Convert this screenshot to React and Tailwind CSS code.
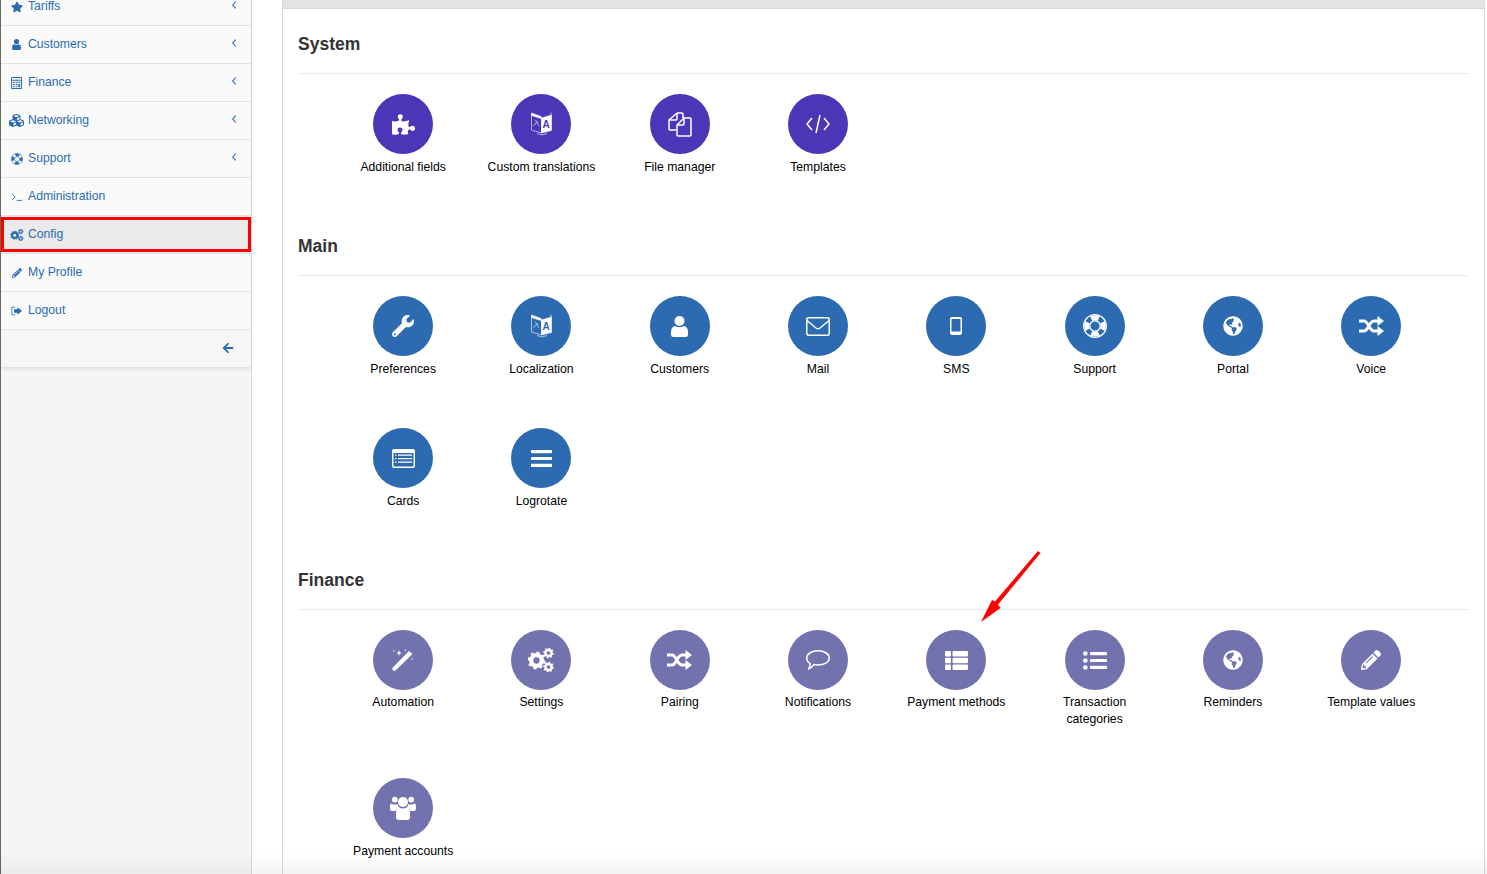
import React from 'react';
import { FaStar, FaCubes, FaArrowLeft, FaPuzzlePiece, FaWrench, FaGlobeAmericas, FaPencilAlt } from 'react-icons/fa';

// Old style (thin) icons that the icon packages only have in a heavier cut
function TerminalIcon({ className }) {
  return (
    <svg viewBox="0 0 14 12" className={className} fill="none" stroke="currentColor" strokeWidth="1">
      <path d="M1 2.5 L5 6 L1 9.5" />
      <path d="M6.5 10 H13" />
    </svg>
  );
}

function LogoutIcon({ className }) {
  return (
    <svg viewBox="0 0 14 12" className={className} fill="currentColor">
      <path d="M5 1 H2 Q0.5 1 0.5 2.5 V9.5 Q0.5 11 2 11 H5 V10 H2.2 Q1.5 10 1.5 9.3 V2.7 Q1.5 2 2.2 2 H5 Z" />
      <path d="M7.5 1.5 L13 6 L7.5 10.5 V8 H3.5 V4 H7.5 Z" />
    </svg>
  );
}

function CalculatorIcon({ className }) {
  return (
    <svg viewBox="0 0 12 13" className={className} fill="currentColor">
      <path fillRule="evenodd" d="M1 0 H11 Q12 0 12 1 V12 Q12 13 11 13 H1 Q0 13 0 12 V1 Q0 0 1 0 Z M1 1 V3 H11 V1 Z M1 4 V12 H11 V4 Z" />
      <path d="M2 5 H4 V6.5 H2 Z M5 5 H7 V6.5 H5 Z M8 5 H10 V6.5 H8 Z M2 7.5 H4 V9 H2 Z M5 7.5 H7 V9 H5 Z M8 7.5 H10 V11 H8 Z M2 10 H4 V11 H2 Z M5 10 H7 V11 H5 Z" />
    </svg>
  );
}

function UserIcon({ className }) {
  return (
    <svg viewBox="0 0 17 21" className={className} fill="currentColor">
      <circle cx="8.5" cy="5" r="5" />
      <path d="M4 10 Q8.5 12.5 13 10 Q17 11 17 16 V18.5 Q17 21 14.5 21 H2.5 Q0 21 0 18.5 V16 Q0 11 4 10 Z" />
    </svg>
  );
}

function RingIcon({ className }) {
  return (
    <svg viewBox="0 0 24 24" className={className} fill="none" stroke="currentColor">
      <circle cx="12" cy="12" r="11.3" strokeWidth="1.3" />
      <circle cx="12" cy="12" r="5.2" strokeWidth="1.3" />
      <circle cx="12" cy="12" r="8.2" strokeWidth="5" pathLength="100" strokeDasharray="15 10" strokeDashoffset="7.5" />
    </svg>
  );
}

function Cog({ x, y, r }) {
  return (
    <g transform={`translate(${x} ${y})`} fill="none" stroke="currentColor">
      <circle r={r * 0.62} strokeWidth={r * 0.5} />
      <circle r={r * 0.9} strokeWidth={r * 0.3} pathLength="48" strokeDasharray="3 3" />
    </g>
  );
}

function CogsIcon({ className }) {
  return (
    <svg viewBox="0 0 26 24" className={className}>
      <Cog x={8.5} y={12.5} r={8.5} />
      <Cog x={20.5} y={5} r={5} />
      <Cog x={20.5} y={19} r={5} />
    </svg>
  );
}

function CodeIcon({ className }) {
  return (
    <svg viewBox="0 0 24 20" className={className} fill="none" stroke="currentColor" strokeWidth="1.5">
      <path d="M6 4 L1 10 L6 16" />
      <path d="M18 4 L23 10 L18 16" />
      <path d="M14 1 L10 19" />
    </svg>
  );
}

function FilesIcon({ className }) {
  return (
    <svg viewBox="0 0 24 25" className={className} fill="none" stroke="currentColor" strokeWidth="1.5" strokeLinejoin="round">
      <path d="M9 1 H14 Q15 1 15 2 V6 M9 1 L1 8 V17 Q1 18 2 18 H8 M9 1 V7 Q9 8 8 8 H1" />
      <path d="M16 6 H22 Q23 6 23 7 V23 Q23 24 22 24 H10 Q9 24 9 23 V13 L16 6 Z M16 6 V12 Q16 13 15 13 H9" />
    </svg>
  );
}

function makeBook(ink) {
  return function BookIcon({ className }) {
    return (
      <svg viewBox="0 0 21 25" className={className} fill="none" stroke="currentColor" strokeWidth="0.6">
        <path d="M0.5 2 L10.5 5.5 V21 L0.5 18 Z" />
        <path d="M0.5 1 L10 4.5 L10 6.5 L0.5 3.5 Z" fill="currentColor" />
        <path d="M10.5 6 L20.5 3 V18.5 L10.5 21 Z" fill="currentColor" />
        <path d="M20 0.5 V3" />
        <path d="M4 8 L7 10.5 M2.5 14 L5.5 10 L8 14" />
        <path d="M6 21.5 Q11 24.5 16 21.5" />
        <text x="11.6" y="16" fontSize="10" fontWeight="700" fill={ink} stroke="none" fontFamily="Liberation Sans">A</text>
      </svg>
    );
  };
}
const BookPurple = makeBook('#4c36b8');
const BookBlue = makeBook('#2c6bb1');

function EnvelopeIcon({ className }) {
  return (
    <svg viewBox="0 0 24 19" className={className} fill="none" stroke="currentColor" strokeWidth="1.5">
      <rect x="0.75" y="0.75" width="22.5" height="17.5" rx="2" />
      <path d="M1 3.5 L10 11 Q12 12.5 14 11 L23 3.5" />
    </svg>
  );
}

function MobileIcon({ className }) {
  return (
    <svg viewBox="0 0 12 18" className={className} fill="currentColor">
      <path fillRule="evenodd" d="M2 0 H10 Q12 0 12 2 V16 Q12 18 10 18 H2 Q0 18 0 16 V2 Q0 0 2 0 Z M1.5 2 V14.5 H10.5 V2 Z" />
    </svg>
  );
}

function ShuffleIcon({ className }) {
  return (
    <svg viewBox="0 0 25 20" className={className} fill="none" stroke="currentColor" strokeWidth="3">
      <path d="M0 5 H5 C9.5 5 10 15 15 15 H20" />
      <path d="M0 15 H5 C9.5 15 10 5 15 5 H20" />
      <path d="M18.5 0 L25 5 L18.5 10 Z M18.5 10 L25 15 L18.5 20 Z" fill="currentColor" stroke="none" />
    </svg>
  );
}

function CardsIcon({ className }) {
  return (
    <svg viewBox="0 0 23 19" className={className} fill="currentColor">
      <path fillRule="evenodd" d="M2 0 H21 Q23 0 23 2 V17 Q23 19 21 19 H2 Q0 19 0 17 V2 Q0 0 2 0 Z M1.5 4 V17.5 H21.5 V4 Z" />
      <path d="M6 5.5 H20 V6.7 H6 Z M6 9 H20 V10.2 H6 Z M6 12.5 H20 V13.7 H6 Z M3 5.5 H4.5 V6.7 H3 Z M3 9 H4.5 V10.2 H3 Z M3 12.5 H4.5 V13.7 H3 Z" />
    </svg>
  );
}

function BarsIcon({ className }) {
  return (
    <svg viewBox="0 0 21 17" className={className} fill="currentColor">
      <rect y="0" width="21" height="3.2" rx="0.6" />
      <rect y="6.9" width="21" height="3.2" rx="0.6" />
      <rect y="13.8" width="21" height="3.2" rx="0.6" />
    </svg>
  );
}

function WandIcon({ className }) {
  return (
    <svg viewBox="0 0 22 22" className={className} fill="currentColor">
      <path d="M17 2 L20.5 5 L3.5 21.6 Q2.2 22.4 1 21.2 Q-0.2 20 0.6 18.8 Z" />
      <path d="M7 1 L7.7 3.3 L10 4 L7.7 4.7 L7 7 L6.3 4.7 L4 4 L6.3 3.3 Z" />
      <path d="M1 1.5 h1.5 v1 h-1.5 Z M19.5 9.5 h1.5 v1 h-1.5 Z M13 0.5 h1 v1.5 h-1 Z" />
    </svg>
  );
}

function CommentIcon({ className }) {
  return (
    <svg viewBox="0 0 24 20" className={className} fill="none" stroke="currentColor" strokeWidth="1.5" strokeLinejoin="round">
      <path d="M12 0.8 C18 0.8 23.2 3.6 23.2 8 C23.2 12.4 18 15 12 15 C10.5 15 9 14.9 7.8 14.6 C6.5 16.6 4.5 18.4 2.5 19 C3.6 17.4 4.4 15.6 4.3 13.6 C2 12.4 0.8 10.4 0.8 8 C0.8 3.6 6 0.8 12 0.8 Z" />
    </svg>
  );
}

function ThListIcon({ className }) {
  return (
    <svg viewBox="0 0 23 19" className={className} fill="currentColor">
      <rect x="0" y="0" width="6" height="5.4" rx="1" />
      <rect x="7.5" y="0" width="15.5" height="5.4" rx="1" />
      <rect x="0" y="6.8" width="6" height="5.4" rx="1" />
      <rect x="7.5" y="6.8" width="15.5" height="5.4" rx="1" />
      <rect x="0" y="13.6" width="6" height="5.4" rx="1" />
      <rect x="7.5" y="13.6" width="15.5" height="5.4" rx="1" />
    </svg>
  );
}

function ListIcon({ className }) {
  return (
    <svg viewBox="0 0 24 19" className={className} fill="currentColor">
      <circle cx="2.3" cy="2.5" r="2.3" />
      <circle cx="2.3" cy="9.5" r="2.3" />
      <circle cx="2.3" cy="16.5" r="2.3" />
      <rect x="7" y="1" width="17" height="3.2" rx="0.6" />
      <rect x="7" y="7.9" width="17" height="3.2" rx="0.6" />
      <rect x="7" y="14.8" width="17" height="3.2" rx="0.6" />
    </svg>
  );
}

function GroupIcon({ className }) {
  return (
    <svg viewBox="0 0 26 24" className={className} fill="currentColor">
      <circle cx="13" cy="6" r="5" />
      <circle cx="4.8" cy="3.6" r="2.9" />
      <circle cx="21.2" cy="3.6" r="2.9" />
      <path d="M1 7.5 Q4.5 9.5 7.3 8 Q8 10.5 9.5 11.6 Q6 13 5.5 15 H2.5 Q0 15 0 12.5 V10 Q0 8 1 7.5 Z" />
      <path d="M25 7.5 Q21.5 9.5 18.7 8 Q18 10.5 16.5 11.6 Q20 13 20.5 15 H23.5 Q26 15 26 12.5 V10 Q26 8 25 7.5 Z" />
      <path d="M8.5 11 Q13 14 17.5 11 Q20 12.5 20 17 V21 Q20 24 17.5 24 H8.5 Q6 24 6 21 V17 Q6 12.5 8.5 11 Z" />
    </svg>
  );
}

function ChevronIcon({ className }) {
  return (
    <svg viewBox="0 0 4 8" className={className} fill="none" stroke="currentColor" strokeWidth="1.1">
      <path d="M3.6 0.5 L0.7 4 L3.6 7.5" />
    </svg>
  );
}

const menu = [
  { label: 'Tariffs', icon: FaStar, arrow: true, size: 'w-3 h-3' },
  { label: 'Customers', icon: UserIcon, arrow: true, size: 'w-[9px] h-[11px]' },
  { label: 'Finance', icon: CalculatorIcon, arrow: true, size: 'w-[11px] h-3' },
  { label: 'Networking', icon: FaCubes, arrow: true, size: 'w-[15px] h-[15px]' },
  { label: 'Support', icon: RingIcon, arrow: true, size: 'w-3 h-3' },
  { label: 'Administration', icon: TerminalIcon, size: 'w-3 h-3' },
  { label: 'Config', icon: CogsIcon, active: true, size: 'w-3.5 h-3' },
  { label: 'My Profile', icon: FaPencilAlt, size: 'w-2.5 h-2.5' },
  { label: 'Logout', icon: LogoutIcon, size: 'w-3 h-3' },
];

const sections = [
  {
    title: 'System',
    color: 'bg-[#4c36b8]',
    items: [
      { label: 'Additional fields', icon: FaPuzzlePiece, size: 'w-[23px] h-[23px]' },
      { label: 'Custom translations', icon: BookPurple, size: 'w-[21px] h-[25px]' },
      { label: 'File manager', icon: FilesIcon, size: 'w-6 h-[25px]' },
      { label: 'Templates', icon: CodeIcon, size: 'w-6 h-5' },
    ],
  },
  {
    title: 'Main',
    color: 'bg-[#2c6bb1]',
    items: [
      { label: 'Preferences', icon: FaWrench, size: 'w-[22px] h-[22px]' },
      { label: 'Localization', icon: BookBlue, size: 'w-[21px] h-[25px]' },
      { label: 'Customers', icon: UserIcon, size: 'w-[17px] h-[21px]' },
      { label: 'Mail', icon: EnvelopeIcon, size: 'w-6 h-[19px]' },
      { label: 'SMS', icon: MobileIcon, size: 'w-3 h-[18px]' },
      { label: 'Support', icon: RingIcon, size: 'w-6 h-6' },
      { label: 'Portal', icon: FaGlobeAmericas, size: 'w-5 h-5' },
      { label: 'Voice', icon: ShuffleIcon, size: 'w-[25px] h-5' },
      { label: 'Cards', icon: CardsIcon, size: 'w-[23px] h-[19px]' },
      { label: 'Logrotate', icon: BarsIcon, size: 'w-[21px] h-[17px]' },
    ],
  },
  {
    title: 'Finance',
    color: 'bg-[#7273ae]',
    items: [
      { label: 'Automation', icon: WandIcon, size: 'w-[22px] h-[22px]', tight: true },
      { label: 'Settings', icon: CogsIcon, size: 'w-[26px] h-6', tight: true },
      { label: 'Pairing', icon: ShuffleIcon, size: 'w-[25px] h-5', tight: true },
      { label: 'Notifications', icon: CommentIcon, size: 'w-6 h-5', tight: true },
      { label: 'Payment methods', icon: ThListIcon, size: 'w-[23px] h-[19px]', tight: true },
      { label: 'Transaction categories', icon: ListIcon, size: 'w-6 h-[19px]', tight: true },
      { label: 'Reminders', icon: FaGlobeAmericas, size: 'w-5 h-5', tight: true },
      { label: 'Template values', icon: FaPencilAlt, size: 'w-5 h-5', tight: true },
      { label: 'Payment accounts', icon: GroupIcon, size: 'w-[26px] h-6' },
    ],
  },
];

function MenuItem({ item }) {
  const Icon = item.icon;
  return (
    <div
      className={`relative flex items-center h-[38px] border-b border-[#e3e3e3] text-[#2c6bb1] ${item.active ? 'bg-[#eaeaea]' : ''}`}
    >
      <span className="w-[27px] shrink-0 flex items-center justify-center pl-[4px]">
        <Icon className={item.size} />
      </span>
      <span className="flex-1 text-[12.2px]">{item.label}</span>
      {item.arrow && <ChevronIcon className="w-1 h-2 mr-[15px] mb-[4px]" />}
      {item.active && <div className="absolute left-0 right-0 top-px bottom-px border-[3px] border-[#ff0000]" />}
    </div>
  );
}

function Sidebar() {
  return (
    <aside className="w-[252px] shrink-0 bg-[#f5f5f5] border-r border-[#dcdcdc] pl-px">
      <div className="-mt-[12px] bg-[#fafafa] shadow-[0_2px_4px_rgba(0,0,0,0.1)]">
        {menu.map((item) => (
          <MenuItem key={item.label} item={item} />
        ))}
        <div className="h-[37px] flex items-center justify-end pr-[17px] pb-[2px] text-[#2c6bb1] bg-[#f6f6f6]">
          <FaArrowLeft className="w-3 h-3" />
        </div>
      </div>
    </aside>
  );
}

function Tile({ item, color }) {
  const Icon = item.icon;
  return (
    <div className={`flex flex-col items-center min-h-[132px] ${item.tight ? 'pb-[51px]' : 'pb-[50px]'}`}>
      <div className={`w-[60px] h-[60px] rounded-full flex items-center justify-center text-white ${color}`}>
        <Icon className={item.size} />
      </div>
      <div className={`${item.tight ? 'mt-[4px]' : 'mt-[5px]'} w-[120px] text-center text-[12.2px] leading-[16.5px] text-black`}>{item.label}</div>
    </div>
  );
}

function Section({ section }) {
  return (
    <section>
      <h2 className="h-[49px] flex items-end text-[17.5px] font-bold text-[#333]">
        <span className="mb-[17px] leading-[24px]">{section.title}</span>
      </h2>
      <div className="border-t border-[#eaeaea] pt-5 pl-[36px] grid grid-cols-[repeat(8,138.3px)] items-start">
        {section.items.map((item) => (
          <Tile key={item.label} item={item} color={section.color} />
        ))}
      </div>
    </section>
  );
}

export default function App() {
  return (
    <div className="relative flex h-[874px] overflow-hidden bg-white font-['Liberation_Sans',Arial,sans-serif]">
      <Sidebar />
      <div className="w-[30px] shrink-0 bg-white" />
      <main className="w-[1203px] shrink-0 border-x border-[#d8d8d8]">
        <div className="h-[9px] bg-[#e4e4e4] border-b border-[#d8d8d8]" />
        <div className="pl-[15px] pr-[16px] mt-[15px]">
          {sections.map((section) => (
            <Section key={section.title} section={section} />
          ))}
        </div>
      </main>
      <div className="absolute left-0 top-0 bottom-0 w-px bg-[#6b6b50]" />
      <svg className="absolute left-[978px] top-[548px]" width="66" height="76" viewBox="0 0 66 76" fill="#ff0000">
        <path d="M3 74 L14 52 L17 53.5 L60 3 L62.5 5 L20 56.5 L22.5 60 Z" />
      </svg>
      <div className="absolute left-0 right-0 bottom-0 h-6 bg-gradient-to-b from-transparent to-[rgba(0,0,0,0.04)]" />
    </div>
  );
}
